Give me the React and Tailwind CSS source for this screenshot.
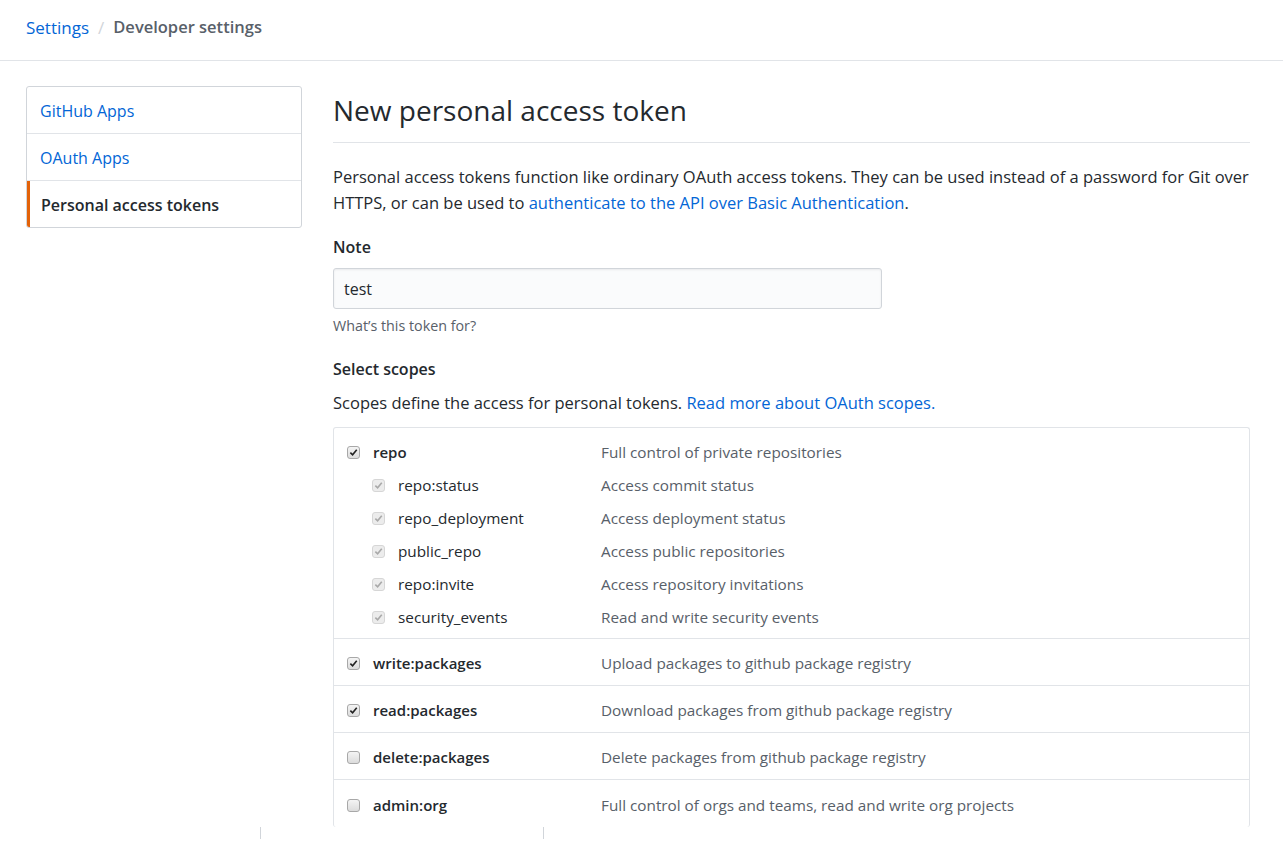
import React from "react";

const font = { fontFamily: '"Open Sans", "Liberation Sans", Arial, sans-serif' };

const Check = ({ checked, disabled }) => (
  <span
    className={`inline-flex items-center justify-center w-[13px] h-[13px] rounded-[3px] border ${
      disabled ? "border-[#d6d6d6] bg-[#ececec]" : "border-[#a8a8a8] bg-gradient-to-b from-[#f4f4f4] to-[#dcdcdc]"
    }`}
  >
    {checked && (
      <svg width="9" height="9" viewBox="0 0 10 10">
        <path
          d="M1.5 5.2 L4 7.6 L8.6 2"
          fill="none"
          stroke={disabled ? "#a9a9a9" : "#222"}
          strokeWidth="1.8"
        />
      </svg>
    )}
  </span>
);

const subScopes = [
  ["repo:status", "Access commit status"],
  ["repo_deployment", "Access deployment status"],
  ["public_repo", "Access public repositories"],
  ["repo:invite", "Access repository invitations"],
  ["security_events", "Read and write security events"],
];

const scopes = [
  ["write:packages", "Upload packages to github package registry", true],
  ["read:packages", "Download packages from github package registry", true],
  ["delete:packages", "Delete packages from github package registry", false],
  ["admin:org", "Full control of orgs and teams, read and write org projects", false],
];

const App = () => {
  return (
    <div className="min-h-[842px] bg-white text-[#24292e] overflow-hidden" style={font}>
      {/* Breadcrumb */}
      <div className="h-[61px] border-b border-[#e1e4e8] pl-[26px] flex items-center pb-[5px] text-[17px]">
        <a className="text-[#0366d6]">Settings</a>
        <span className="mx-[9px] text-[#d1d5da]">/</span>
        <span className="font-semibold text-[#586069] text-[16.5px]">Developer settings</span>
      </div>

      <div className="flex pl-[26px] pt-[25px]">
        {/* Sidebar */}
        <nav className="w-[276px] shrink-0 self-start border border-[#d1d5da] rounded-[3px] text-[16px]">
          <a className="block h-[47px] leading-[49px] pl-[13px] text-[#0366d6] border-b border-[#e1e4e8]">GitHub Apps</a>
          <a className="block h-[47px] leading-[49px] pl-[13px] text-[#0366d6] border-b border-[#e1e4e8]">OAuth Apps</a>
          <a className="block h-[46px] leading-[48px] pl-[11px] border-l-[3px] border-[#e36209] font-semibold text-[#24292e] rounded-bl-[2px]">
            Personal access tokens
          </a>
        </nav>

        {/* Main */}
        <main className="ml-[31px] w-[917px] text-[16.5px]">
          <h1 className="text-[28px] leading-[40px] pt-[4px] pb-[12px] border-b border-[#e1e4e8]">New personal access token</h1>

          <p className="mt-[21px] leading-[26px]">
            Personal access tokens function like ordinary OAuth access tokens. They can be used instead of a password for Git over HTTPS, or can be used to{" "}
            <a className="text-[#0366d6]">authenticate to the API over Basic Authentication</a>.
          </p>

          <div className="mt-[19px] font-semibold leading-[24px] text-[16px]">Note</div>
          <div className="mt-[9px] w-[549px] h-[41px] border border-[#d1d5da] rounded-[3px] bg-[#fafbfc] flex items-center pl-[10px] text-[16px] shadow-[inset_0_1px_2px_rgba(27,31,35,0.075)]">
            test
          </div>
          <div className="mt-[6px] text-[14.3px] text-[#586069] leading-[22px]">What’s this token for?</div>

          <div className="mt-[20px] font-semibold leading-[24px] text-[16px]">Select scopes</div>
          <p className="mt-[10px] leading-[24px]">
            Scopes define the access for personal tokens. <a className="text-[#0366d6]">Read more about OAuth scopes.</a>
          </p>

          <div className="mt-[12px] border border-[#e1e4e8] rounded-[3px] border-b-0 text-[15.3px]">
            <div className="pt-[12px] pb-[9px] border-b border-[#e1e4e8]">
              <div className="flex items-center h-[24px]">
                <div className="w-[39px] pl-[13px] flex"><Check checked /></div>
                <div className="w-[228px] font-semibold text-[15px]">repo</div>
                <div className="text-[#586069]">Full control of private repositories</div>
              </div>
              {subScopes.map(([name, desc]) => (
                <div key={name} className="flex items-center h-[33px] pt-[9px]">
                  <div className="w-[64px] pl-[38px] flex"><Check checked disabled /></div>
                  <div className="w-[203px]">{name}</div>
                  <div className="text-[#586069]">{desc}</div>
                </div>
              ))}
            </div>
            {scopes.map(([name, desc, checked], i) => (
              <div
                key={name}
                className={`flex items-center h-[47px] pt-[3px] ${i < scopes.length - 1 ? "border-b border-[#e1e4e8]" : ""}`}
              >
                <div className="w-[39px] pl-[13px] flex"><Check checked={checked} /></div>
                <div className="w-[228px] font-semibold text-[15px]">{name}</div>
                <div className="text-[#586069]">{desc}</div>
              </div>
            ))}
          </div>
        </main>
      </div>

      <div className="flex">
        <div className="ml-[260px] w-px h-[12px] bg-[#d1d5da]" />
        <div className="ml-[282px] w-px h-[12px] bg-[#d1d5da]" />
      </div>
    </div>
  );
};

export default App;
